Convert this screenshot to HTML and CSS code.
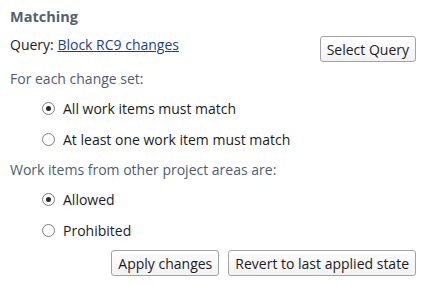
FILE: index.html
```html
<!DOCTYPE html>
<html lang="en">
<head>
    <meta charset="UTF-8">
    <title>Matching</title>
    <link rel="stylesheet" href="styles.css">
</head>
<body>
    <div class="panel">
        <h2 class="title">Matching</h2>

        <!-- Query row -->
        <div class="query-row">
            <div class="query">Query: <a href="#" class="query-link">Block RC9 changes</a></div>
            <button class="btn">Select Query</button>
        </div>

        <p class="label">For each change set:</p>
        <div class="options">
            <label class="option"><span class="radio checked"></span>All work items must match</label>
            <label class="option"><span class="radio"></span>At least one work item must match</label>
        </div>

        <p class="label">Work items from other project areas are:</p>
        <div class="options">
            <label class="option"><span class="radio checked"></span>Allowed</label>
            <label class="option"><span class="radio"></span>Prohibited</label>
        </div>

        <div class="actions">
            <button class="btn">Apply changes</button>
            <button class="btn">Revert to last applied state</button>
        </div>
    </div>
</body>
</html>
```

FILE: styles.css
```css
body {
    margin: 0;
    padding: 0;
    background-color: #ffffff;
    font-family: "Open Sans", "DejaVu Sans", sans-serif;
    font-size: 14px;
    color: #1c1c1c;
}

.panel {
    padding: 7px 10px 0 10px;
}

.title {
    margin: 0;
    font-size: 14.5px;
    font-weight: bold;
    color: #56606e;
}

.query-row {
    display: flex;
    justify-content: space-between;
    align-items: flex-start;
    margin-top: 7px;
}

.query {
    padding-top: 2px;
}

.query-link {
    color: #1a3f8f;
    text-decoration: underline;
}

.query-row .btn {
    margin-top: 3px;
}

.label {
    margin: 7px 0 0 0;
    color: #4e5d72;
}

.label + .options {
    margin-top: 10px;
}

.options + .label {
    margin-top: 11px;
}

.options {
    display: flex;
    flex-direction: column;
    gap: 11px;
    padding-left: 32px;
}

.option {
    display: flex;
    align-items: center;
    gap: 8px;
    height: 20px;
}

.radio {
    width: 11px;
    height: 11px;
    border: 1px solid #7c7c7c;
    border-radius: 50%;
    background-color: #ffffff;
    position: relative;
}

.radio.checked::after {
    content: "";
    position: absolute;
    left: 3px;
    top: 3px;
    width: 5px;
    height: 5px;
    border-radius: 50%;
    background-color: #2a2a2a;
}

.btn {
    font-family: inherit;
    font-size: 14px;
    color: #1c1c1c;
    padding: 0 6px;
    height: 26px;
    border: 1px solid #a3a3a3;
    border-radius: 3px;
    background: linear-gradient(#ffffff, #f2f2f2);
}

.actions {
    display: flex;
    justify-content: flex-end;
    gap: 9px;
    margin-top: 10px;
}
```
